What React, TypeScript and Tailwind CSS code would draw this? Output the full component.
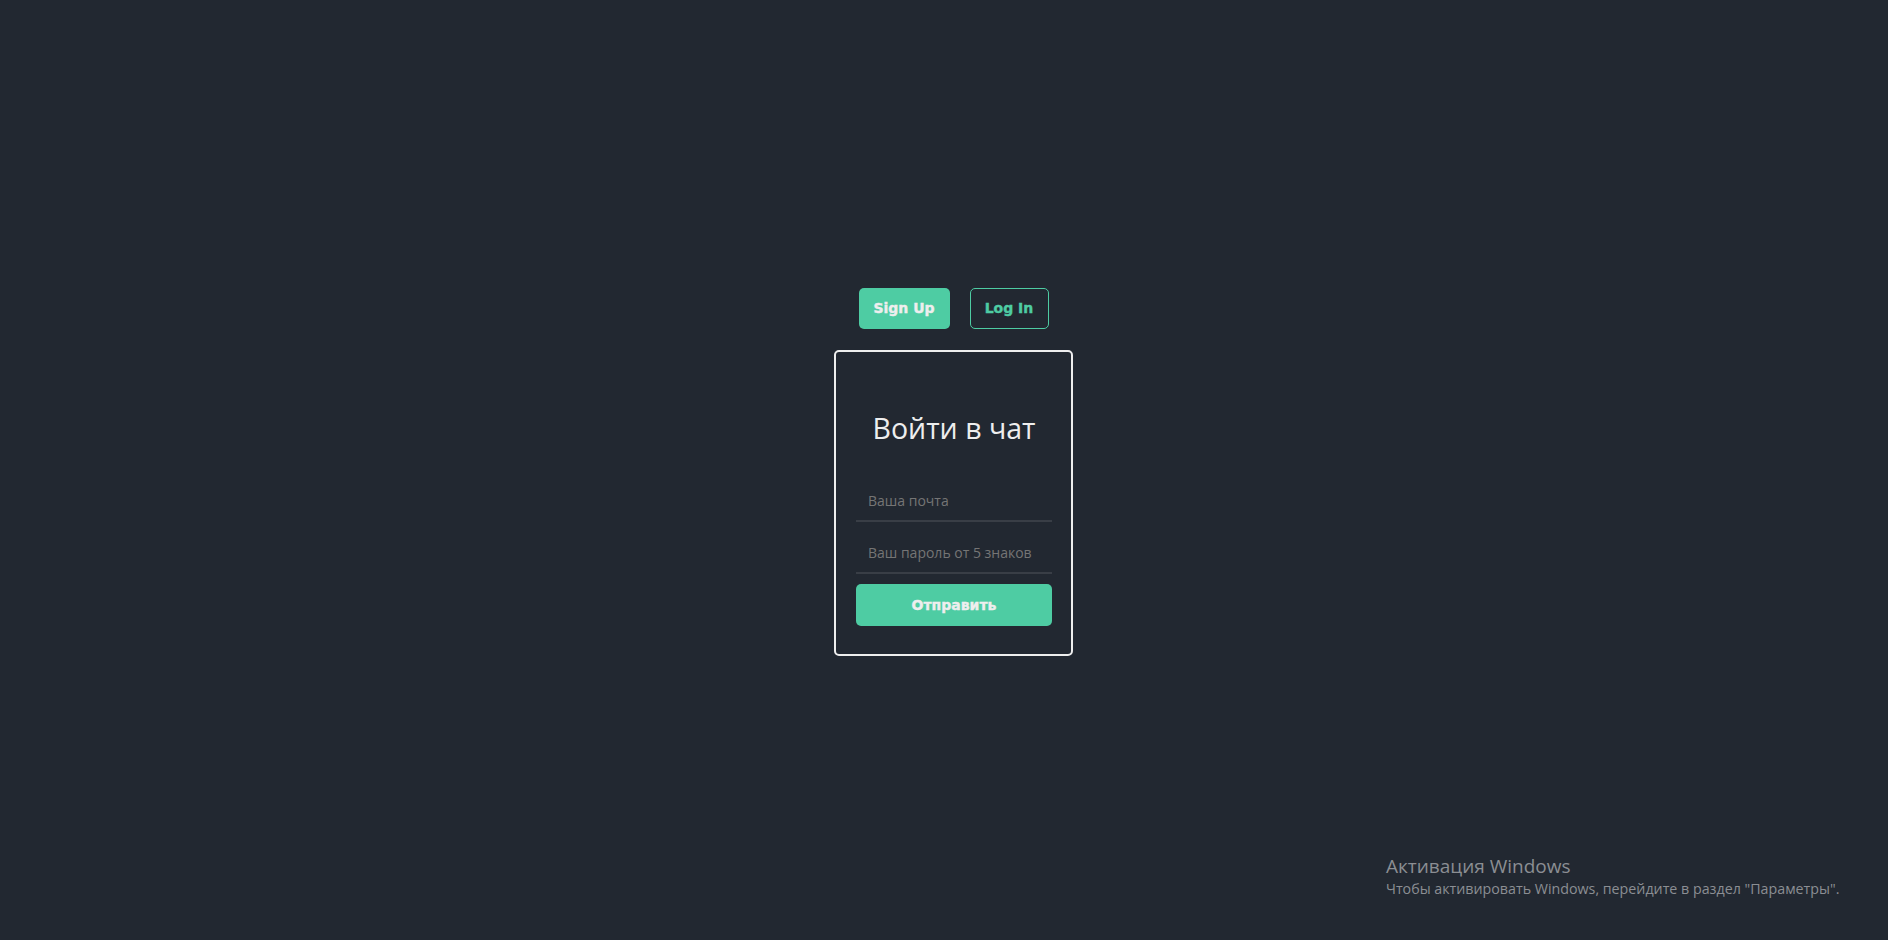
import React from "react";

export default function App() {
  return (
    <div className="relative w-full h-[940px] bg-[#222831] overflow-hidden" style={{ fontFamily: "'Open Sans', 'Noto Sans', sans-serif" }}>
      <div className="flex h-full flex-col items-center justify-center pl-[19px] pt-[4px]">
        <div className="flex gap-[20px]" style={{ fontFamily: "'DejaVu Sans', Verdana, sans-serif" }}>
          <button className="h-[41px] w-[91px] rounded-[5px] bg-[#4ecca3] text-[14px] font-bold text-[#eeeeee] [-webkit-text-stroke:0.4px_#eeeeee]">Sign Up</button>
          <button className="h-[41px] w-[79px] rounded-[5px] border border-[#4ecca3] text-[14px] font-bold text-[#4ecca3] [-webkit-text-stroke:0.4px_#4ecca3]">Log In</button>
        </div>
        <div className="mt-[21px] flex h-[306px] w-[239px] flex-col rounded-[5px] border-2 border-[#eeeeee] pl-[20px] pr-[19px] pt-[56px]">
          <h1 className="text-center text-[28.5px] leading-[40px] text-[#eeeeee]">Войти в чат</h1>
          <div className="mt-[32px] flex h-[42px] items-center border-b-2 border-[#393e46] pl-[12px] text-[14px] text-[#757575]">Ваша почта</div>
          <div className="mt-[10px] flex h-[42px] items-center border-b-2 border-[#393e46] pl-[12px] text-[14px] text-[#757575]">Ваш пароль от 5 знаков</div>
          <button className="mt-[10px] h-[42px] w-full rounded-[5px] bg-[#4ecca3] text-[14px] font-bold text-[#eeeeee] [-webkit-text-stroke:0.4px_#eeeeee]" style={{ fontFamily: "'DejaVu Sans', Verdana, sans-serif" }}>Отправить</button>
        </div>
      </div>
      <div className="absolute left-[1386px] top-[854px] text-[#8b8e93]">
        <div className="text-[19px] leading-[25px]">Активация Windows</div>
        <div className="text-[14.25px] leading-[20px]">Чтобы активировать Windows, перейдите в раздел "Параметры".</div>
      </div>
    </div>
  );
}
